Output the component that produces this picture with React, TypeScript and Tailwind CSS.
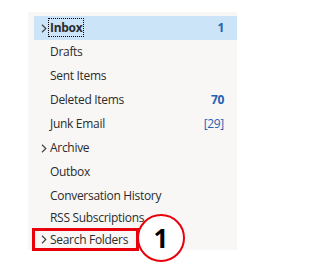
import React from "react";

type Row = { name: string; h: number; chevron?: boolean; count?: string; bracket?: boolean; selected?: boolean };

const rows: Row[] = [
  { name: "Inbox", h: 24, chevron: true, count: "1", selected: true },
  { name: "Drafts", h: 24 },
  { name: "Sent Items", h: 24 },
  { name: "Deleted Items", h: 24, count: "70" },
  { name: "Junk Email", h: 24, count: "[29]", bracket: true },
  { name: "Archive", h: 24, chevron: true },
  { name: "Outbox", h: 24 },
  { name: "Conversation History", h: 23 },
  { name: "RSS Subscriptions", h: 21 },
  { name: "Search Folders", h: 23, chevron: true },
];

function Chevron() {
  return (
    <svg width="6" height="9" viewBox="0 0 6 9" className="block">
      <path d="M1 0.8 L4.8 4.5 L1 8.2" fill="none" stroke="#444" strokeWidth="1.2" />
    </svg>
  );
}

export default function App() {
  return (
    <div className="relative w-[316px] h-[271px] bg-white" style={{ fontFamily: '"Segoe UI", "Open Sans", "Noto Sans", sans-serif' }}>
      <div className="absolute left-[28px] top-[12px] w-[209px] h-[238px] bg-[#f8f7f6] pt-[4px] pl-[6px]">
        <div className="flex flex-col">
          {rows.map((r) => (
            <div
              key={r.name}
              className={`relative flex items-center pl-[16px] pr-[13px] pb-[1px] text-[12px] tracking-[-0.3px] text-[#2b2b2b] ${r.selected ? "bg-[#cce4f7]" : ""}`}
              style={{ height: r.h }}
            >
              {r.chevron && (
                <div className="absolute left-[7px] top-0 bottom-0 flex items-center">
                  <Chevron />
                </div>
              )}
              <span
                className={`leading-[17px] ${r.selected ? "font-bold outline-1 outline-dotted outline-black -ml-[1px] px-[1px]" : ""}`}
              >
                {r.name}
              </span>
              {r.count && (
                <span className={`ml-auto text-[#2462b0] ${r.bracket ? "font-normal" : "font-bold"}`}>{r.count}</span>
              )}
            </div>
          ))}
        </div>
      </div>
      <div className="absolute left-[32px] top-[228px] w-[107px] h-[23px] border-[3px] border-[#e8000b]" />
      <div className="absolute left-[137px] top-[214px] w-[48px] h-[48px] rounded-full border-[2px] border-[#e8000b] bg-white flex items-center justify-center">
        <span className="text-[26px] font-bold text-black leading-none" style={{ fontFamily: '"Open Sans", "Noto Sans", sans-serif' }}>1</span>
      </div>
    </div>
  );
}
